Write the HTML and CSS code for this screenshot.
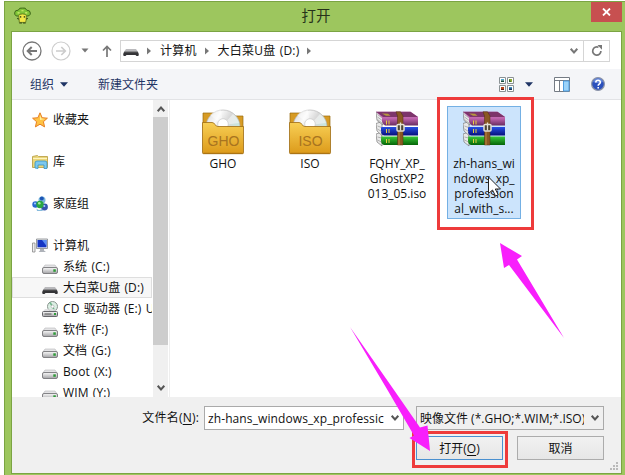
FILE: index.html
```html
<!DOCTYPE html>
<html lang="zh-CN">
<head>
    <meta charset="UTF-8">
    <meta name="viewport" content="width=device-width, initial-scale=1.0">
    <title>打开</title>

    <link rel="stylesheet" href="styles.css">
</head>
<body>

    <!-- shared icons -->
    <svg class="defs" width="0" height="0">
      <defs>
        <linearGradient id="gold" x1="0" y1="0" x2="0" y2="1">
          <stop offset="0" stop-color="#f8cf55"/>
          <stop offset="1" stop-color="#dc9a1a"/>
        </linearGradient>
        <linearGradient id="disc" x1="0" y1="0" x2="1" y2="0.6">
          <stop offset="0" stop-color="#d4d4d4"/>
          <stop offset="0.35" stop-color="#fafafa"/>
          <stop offset="0.6" stop-color="#d8d8d8"/>
          <stop offset="1" stop-color="#c2ebe2"/>
        </linearGradient>
        <linearGradient id="metal" x1="0" y1="0" x2="0" y2="1">
          <stop offset="0" stop-color="#fafafa"/>
          <stop offset="1" stop-color="#a3a3a6"/>
        </linearGradient>
        <linearGradient id="pink" x1="0" y1="0" x2="0" y2="1">
          <stop offset="0" stop-color="#d58acb"/>
          <stop offset="0.5" stop-color="#bd62ab"/>
          <stop offset="1" stop-color="#692c60"/>
        </linearGradient>
        <linearGradient id="blue" x1="0" y1="0" x2="0" y2="1">
          <stop offset="0" stop-color="#2750e6"/>
          <stop offset="1" stop-color="#07107b"/>
        </linearGradient>
        <linearGradient id="green" x1="0" y1="0" x2="0" y2="1">
          <stop offset="0" stop-color="#38c938"/>
          <stop offset="1" stop-color="#056408"/>
        </linearGradient>
      </defs>
      <symbol id="drive" viewBox="0 0 16 10">
        <path d="M3 1h10l2.500 3.500H.5z" fill="#e4e4e6" stroke="#b5b5b8" stroke-width=".6"/>
        <rect x=".5" y="3.500" width="15" height="6" rx="1.500" fill="url(#metal)" stroke="#77777b" stroke-width=".9"/>
        <rect x="11.300" y="5.300" width="2.500" height="2.500" fill="#2f9a39"/>
      </symbol>
      <symbol id="usb" viewBox="0 0 16 10">
        <path d="M3 2h10l2.500 3.500H.5z" fill="#b9b9bc"/>
        <path d="M1.500 4.800h13q1.300 1 1.300 2.600t-1 1.600H13.500l-1-1h-9l-1 1H1.200Q.2 9 .2 7.500t1.300-2.700z" fill="#343437"/>
        <path d="M1.500 5h13" stroke="#777" stroke-width=".7"/>
      </symbol>
      <symbol id="chevron" viewBox="0 0 10 8">
        <path d="M1.700 1.800L5 5.400l3.300-3.600" fill="none" stroke="currentColor" stroke-width="2"/>
      </symbol>
      <symbol id="folder" viewBox="0 0 44 48">
        <path d="M2 6h11v4h18V9h11v12H2z" fill="#d79b24" stroke="#9a6a10" stroke-width=".7"/>
        <circle cx="22" cy="20" r="17" fill="url(#disc)" stroke="#b7b7b7" stroke-width=".7"/>
        <path d="M22 18L9 8q5-5 11-5zM22 18l10-11q5 4 6 9z" fill="#fff" opacity=".45"/>
        <circle cx="22" cy="17" r="5.300" fill="#fff" stroke="#c9c9c9" stroke-width=".7"/>
        <path d="M1.500 15.500h9.500q2 0 3 2t3 2H42.500v26.200q0 1-1 1h-39q-1 0-1-1z" fill="url(#gold)" stroke="#9d6b13" stroke-width=".8"/>
        <path d="M2.300 46.300h39.400" stroke="#a87010"/>
      </symbol>
      <symbol id="archive" viewBox="0 0 42 36">
        <path d="M0 23l6-2v14L1 31z" fill="#e9e9e9" stroke="#666" stroke-width=".6"/>
        <path d="M5 25.500h37V34H8q-3-1-3-4z" fill="url(#green)"/>
        <path d="M0 12.500l6-2v14L1 20z" fill="#e9e9e9" stroke="#666" stroke-width=".6"/>
        <path d="M5 16h37v8.500H8q-3-1-3-4z" fill="url(#blue)"/>
        <path d="M0 1l7 4v9L1 9.500z" fill="#e9e9e9" stroke="#666" stroke-width=".6"/>
        <path d="M0 .8h34.500L42 6v8.500H9Q5 12 6 7z" fill="url(#pink)"/>
        <path d="M0 .8h34.500L42 6H7z" fill="#7d356b"/>
        <path d="M6 2.500l6 .2 2.500 2H10z" fill="#b5993d"/>
        <path d="M1.500 3.500l4 3M1.500 6l4 3M1.500 8.500l5 4M1.500 15l4 1.500M1.500 18l4 2.500M1.500 26l4 1M1.500 29l4 2" stroke="#9a9a9a" stroke-width=".7"/>
        <path d="M10.500 9.500v4M13 9.500v4M10.500 18v4M13 18v4M10.500 28v4M13 28v4" stroke="#e6cf3e"/>
        <path d="M20 .8h4.500L27 5v29h-5.500V5z" fill="#8a5823" stroke="#4f3110" stroke-width=".5"/>
        <path d="M23 14v20" stroke="#bb8745"/>
        <rect x="21" y="13.500" width="7" height="6.500" rx="1" fill="#4d4635" stroke="#e3e0d5" stroke-width="1.500"/>
        <path d="M24.500 11.500v8" stroke="#e3e0d5" stroke-width="1.300"/>
      </symbol>
    </svg>

    <div class="window">
      <header class="titlebar">
        <svg class="app-icon" viewBox="0 0 16 16">
          <path d="M4.500 8.500Q.5 9 .6 5.500.8 2.800 4 3 5 .3 8 1q3-.8 4 2 3.300 0 3.400 2.700.1 3-3.900 2.800z" fill="#7fc437" stroke="#2f5613" stroke-width=".8"/>
          <path d="M3.300 5.500h2M7 3.500h2M10.500 5.500h2" stroke="#d3f071"/>
          <path d="M4.500 8q0-1.500 3.500-1.500T11.500 8v3.500L11 14.500H5z" fill="#f2e747" stroke="#5b741a" stroke-width=".8"/>
          <path d="M6.300 8.500v1.500M9.700 8.500v1.500M3 10.500l1.500 1M13 10.500l-1.500 1M5 15h2.500M8.500 15H11" stroke="#354415"/>
        </svg>
        <h1 class="title">打开</h1>
        <button class="close" aria-label="关闭">
          <svg width="9" height="8" viewBox="0 0 9 8"><path d="M1 .5l7 7M8 .5l-7 7" stroke="#fff" stroke-width="1.800"/></svg>
        </button>
      </header>

      <div class="client">
        <nav class="navbar">
          <svg class="nav-back" viewBox="0 0 20 20"><circle cx="10" cy="10" r="9" fill="#fff" stroke="#777" stroke-width="1.300"/><path d="M15 10H6M9.700 6L5.700 10l4 4" fill="none" stroke="#777" stroke-width="2"/></svg>
          <svg class="nav-forward" viewBox="0 0 20 20"><circle cx="10" cy="10" r="9" fill="#fff" stroke="#ccc" stroke-width="1.200"/><path d="M5 10h9M10.300 6l4 4-4 4" fill="none" stroke="#ccc" stroke-width="1.700"/></svg>
          <svg class="nav-recent" viewBox="0 0 8 5"><path d="M.5.500h7L4 4.500z" fill="#777"/></svg>
          <svg class="nav-up" viewBox="0 0 10 12"><path d="M5 12V2M1 5.500l4-4 4 4" fill="none" stroke="#777" stroke-width="1.700"/></svg>
          <div class="address">
            <svg class="address-icon"><use href="#usb"/></svg>
            <svg class="crumb-arrow" viewBox="0 0 4 8"><path d="M0 .5L4 4 0 7.500z"/></svg>
            <span class="crumb">计算机</span>
            <svg class="crumb-arrow" viewBox="0 0 4 8"><path d="M0 .5L4 4 0 7.500z"/></svg>
            <span class="crumb">大白菜U盘 (D:)</span>
            <svg class="crumb-arrow" viewBox="0 0 4 8"><path d="M0 .5L4 4 0 7.500z"/></svg>
            <svg class="chevron address-chevron"><use href="#chevron"/></svg>
            <div class="refresh">
              <svg width="12" height="12" viewBox="0 0 12 12"><path d="M7.500 2.300A4.100 4.100 0 1 0 9.900 6" fill="none" stroke="#777" stroke-width="1.700"/><path d="M6.500 0h4.500v4.800z" fill="#777"/></svg>
            </div>
          </div>
        </nav>

        <div class="toolbar">
          <span class="organize">组织</span>
          <svg class="tool-arrow" viewBox="0 0 8 5"><path d="M0 .3h8L4 4.700z"/></svg>
          <span class="new-folder">新建文件夹</span>
          <svg class="view-icon" viewBox="0 0 15 15">
            <g fill="#fff" stroke="#8a9295"><path d="M.5.500h6v6h-6zM8.500.500h6v6h-6zM.5 8.500h6v6h-6zM8.500 8.500h6v6h-6z"/></g>
            <path d="M2 2h3v1.500H2z" fill="#50a9cf"/><path d="M2 3.500h3V5H2z" fill="#164c3c"/>
            <path d="M10 2h3v3h-3z" fill="#8da933"/><path d="M10 2l2 3h-2z" fill="#315f31"/>
            <path d="M2 10h3v3H2z" fill="#b74117"/><path d="M2 12h3v1H2z" fill="#5b1a12"/>
            <path d="M10 10h3v3h-3z" fill="#438cc0"/><path d="M10 11.500h3V13h-3z" fill="#18345c"/>
          </svg>
          <svg class="tool-arrow view-arrow" viewBox="0 0 8 5"><path d="M0 .3h8L4 4.700z"/></svg>
          <svg class="pane-icon" viewBox="0 0 16 15">
            <path d="M.5.500h15v14H.5z" fill="#fff" stroke="#747b84"/><path d="M.5 3.500h15M5.500 3.500v11" stroke="#747b84"/>
            <path d="M9.500 4h5.500v10H9.500z" fill="#9bd3fa" stroke="#4d9de0"/>
          </svg>
          <svg class="help-icon" viewBox="0 0 14 14">
            <circle cx="7" cy="7" r="6.400" fill="#2b50bc" stroke="#8e95a7" stroke-width="1.200"/>
            <path d="M2 5q1-3.500 5-3.700T12 5Q7 7 2 5z" fill="#7798e6" opacity=".7"/>
            <path d="M4.800 5.500q0-2.200 2.300-2.200t2.200 2Q9.300 6.500 8 7.200 7.200 7.700 7.200 8.700M7.200 10v1.500" fill="none" stroke="#fff" stroke-width="1.600"/>
          </svg>
        </div>

        <main class="body">
          <aside class="sidebar">
            <ul class="tree">
              <li class="group">
                <svg class="group-icon" viewBox="0 0 16 16"><path d="M8 .8l2.100 4.900 5.300.5-4 3.500 1.200 5.200L8 12.200l-4.600 2.700 1.200-5.200-4-3.500 5.300-.5z" fill="#ffc344" stroke="#e77f24"/><path d="M8 3l1.300 3.500L13 7 8 8z" fill="#fff1a0"/></svg>收藏夹
              </li>
              <li class="group">
                <svg class="group-icon" viewBox="0 0 16 16"><path d="M.5 2.500l5-1 1 1h9v11H.5z" fill="#ead67a" stroke="#c3aa56"/><path d="M1 4.500h14" stroke="#fff4bd"/><path d="M3 14V9q0-2 2-2h8q2 0 2 2v5.500h-3V11H6v3.500z" fill="#7cc8ee" stroke="#3293c5" stroke-width=".8"/></svg>库
              </li>
              <li class="group">
                <svg class="group-icon" viewBox="0 0 16 16"><circle cx="10" cy="4" r="3.500" fill="#78b5dc"/><circle cx="9.800" cy="2.500" r="2" fill="#1d55b5"/><circle cx="3.500" cy="8.500" r="3.200" fill="#2867d2"/><circle cx="12.500" cy="11" r="3.400" fill="#3454ae"/><circle cx="8" cy="8.500" r="3.700" fill="#2aa743"/><path d="M4.500 12.500q3 3 5 0L11 15H5z" fill="#87bbdd"/><circle cx="7.300" cy="7.200" r="1.300" fill="#a8e99b"/><circle cx="3" cy="7.500" r="1" fill="#a7ceff"/><circle cx="12.300" cy="10" r="1" fill="#a7ceff"/></svg>家庭组
              </li>
              <li class="group computer">
                <svg class="group-icon" viewBox="0 0 16 16"><path d="M.5 5h2.500v9H.5z" fill="#eee" stroke="#888" stroke-width=".8"/><path d="M4.500 1h11v9.500h-11z" fill="#e7e9ec" stroke="#83878c" stroke-width=".8"/><path d="M5.500 2h9v7.300h-9z" fill="#1535c4"/><path d="M10 2h4.500v6z" fill="#5c8ff4"/><path d="M8 11h4v1.500l2 1.500H6.500L8 12.500z" fill="#aeb2b9"/></svg>计算机
              </li>
              <li class="drive"><svg class="drive-icon"><use href="#drive"/></svg>系统 (C:)</li>
              <li class="drive is-selected"><svg class="drive-icon"><use href="#usb"/></svg>大白菜U盘 (D:)</li>
              <li class="drive">
                <svg class="cd-icon" viewBox="0 0 16 16"><circle cx="10.500" cy="5.500" r="5" fill="#dcefe4" stroke="#8b9690"/><path d="M10.500 5.500L8 1.500M10.500 5.500l2 4" stroke="#6fb58a" stroke-width="1.500"/><circle cx="10.500" cy="5.500" r="1.500" fill="#fff" stroke="#999" stroke-width=".5"/><path d="M3 8h10l2.500 3H.5z" fill="#dadadc" opacity=".8"/><rect x=".5" y="10.500" width="15" height="5" rx="1" fill="url(#metal)" stroke="#68686c"/><path d="M2.500 13h7" stroke="#555"/><path d="M12 12h2v2h-2z" fill="#2f9a39"/></svg>CD 驱动器 (E:) U
              </li>
              <li class="drive"><svg class="drive-icon"><use href="#drive"/></svg>软件 (F:)</li>
              <li class="drive"><svg class="drive-icon"><use href="#drive"/></svg>文档 (G:)</li>
              <li class="drive"><svg class="drive-icon"><use href="#drive"/></svg>Boot (X:)</li>
              <li class="drive"><svg class="drive-icon"><use href="#drive"/></svg>WIM (Y:)</li>
            </ul>
            <div class="scrollbar">
              <svg class="chevron chevron-up"><use href="#chevron"/></svg>
              <div class="thumb"></div>
              <svg class="chevron"><use href="#chevron"/></svg>
            </div>
          </aside>

          <section class="files">
            <figure class="file">
              <svg class="folder-icon" viewBox="0 0 44 48"><use href="#folder"/><text class="folder-text" x="22.500" y="38.500">GHO</text></svg>
              <figcaption>GHO</figcaption>
            </figure>
            <figure class="file">
              <svg class="folder-icon" viewBox="0 0 44 48"><use href="#folder"/><text class="folder-text" x="22.500" y="38.500">ISO</text></svg>
              <figcaption>ISO</figcaption>
            </figure>
            <figure class="file">
              <svg class="archive-icon"><use href="#archive"/></svg>
              <figcaption>FQHY_XP_<br>GhostXP2<br>013_05.iso</figcaption>
            </figure>
            <figure class="file is-active">
              <svg class="archive-icon"><use href="#archive"/></svg>
              <figcaption>zh-hans_wi<br>ndows_xp_<br>profession<br>al_with_s...</figcaption>
            </figure>
          </section>
        </main>

        <footer class="footer">
          <div class="name-label">文件名(<u>N</u>):</div>
          <div class="name-input"><span>zh-hans_windows_xp_professic</span><svg class="chevron"><use href="#chevron"/></svg></div>
          <div class="type-select"><span>映像文件 (*.GHO;*.WIM;*.ISO)</span><svg class="chevron"><use href="#chevron"/></svg></div>
          <div class="buttons">
            <button class="btn btn-open">打开(<u>O</u>)</button>
            <button class="btn">取消</button>
          </div>
          <svg class="grip" viewBox="0 0 8 8"><path d="M6 0h2v2H6zM3 3h2v2H3zM6 3h2v2H6zM0 6h2v2H0zM3 6h2v2H3zM6 6h2v2H6z" fill="#b9b9b9"/></svg>
        </footer>
      </div>
    </div>

    <!-- red frames, arrows and the mouse pointer lie over the dialog -->
    <svg class="marks" viewBox="0 0 625 475">
      <rect x="438.500" y="98.500" width="94" height="130" fill="none" stroke="#ee3b3b" stroke-width="3"/>
      <rect x="413.500" y="432.500" width="93" height="34" fill="none" stroke="#ee3b3b" stroke-width="3"/>
      <path d="M500 243l22 13-5 3.500L564 338 509 265l-5 3z" fill="#f81ffc"/>
      <path d="M350 327l44 63 26 37.500 7.500-2 2.500 25.500-20.500-13 4.500-2.500-26.500-45.500z" fill="#f81ffc"/>
      <path d="M488.500 177v16.500l4-3.500 3 6 2.700-1.300-2.900-5.700h5.200z" fill="#fff" stroke="#222"/>
    </svg>

</body>
</html>
```
FILE: styles.css
```css
html,
body {
  height: 100%;
  overflow: hidden;
}

* {
  box-sizing: border-box;
}

body {
  margin: 0;
  padding: 1px 0 0 4px;
  background: #fff;
  color: #111;
  font-family: "Open Sans", "Noto Sans CJK SC", sans-serif;
  font-size: 12px;
  line-height: 15px;
}

svg {
  display: block;
  flex: none;
}

u {
  text-underline-offset: 2px;
}

.defs {
  position: absolute;
}

.window {
  height: 474px;
  padding: 0 3px 0 7px;
  background: #9dc65e;
  border-top: 1px solid #7ba443;
  border-left: 1px solid #7ba443;
}

.titlebar {
  display: flex;
  height: 29px;
}

.app-icon {
  width: 17px;
  height: 17px;
  margin: 5px 0 0 2px;
}

.title {
  flex: 1;
  margin: 4px 0 0;
  padding-left: 10px;
  text-align: center;
  font-size: 14.5px;
  font-weight: normal;
  line-height: 20px;
  color: #26321a;
}

.close {
  display: flex;
  align-items: center;
  justify-content: center;
  width: 31px;
  height: 20px;
  padding: 0;
  border: 0;
  background: #c75050;
}

.client {
  height: 443px;
  background: #fff;
  border: 1px solid #7ba443;
  margin-left: -1px;
}

/* navigation */

.navbar {
  display: flex;
  align-items: center;
  height: 37px;
  padding: 0 11px 0 10px;
}

.nav-back,
.nav-forward {
  width: 20px;
  height: 20px;
}

.nav-forward {
  margin-left: 9px;
}

.nav-recent {
  width: 8px;
  height: 5px;
  margin-left: 10px;
}

.nav-up {
  width: 10px;
  height: 12px;
  margin-left: 13px;
}

.address {
  display: flex;
  align-items: center;
  flex: 1;
  height: 22px;
  margin-left: 8px;
  padding-left: 2px;
  border: 1px solid #d5d5d5;
}

.address-icon {
  width: 16px;
  height: 10px;
  margin-top: 2px;
}

.crumb-arrow {
  width: 4px;
  height: 8px;
  margin-left: 8px;
  fill: #777;
}

.crumb {
  margin-left: 9px;
  letter-spacing: .2px;
  word-spacing: 1px;
  white-space: nowrap;
}

.chevron {
  width: 10px;
  height: 8px;
  color: #555;
}

.address-chevron {
  margin-left: auto;
  color: #777;
}

.refresh {
  display: flex;
  align-items: center;
  justify-content: center;
  width: 26px;
  height: 20px;
  margin-left: 4px;
  border-left: 1px solid #d5d5d5;
}

.toolbar {
  display: flex;
  align-items: center;
  height: 31px;
  padding: 0 16px 0 18px;
  background: #f4f5f8;
  border-bottom: 1px solid #e2e3e6;
  color: #1f3465;
}

.tool-arrow {
  width: 8px;
  height: 5px;
  margin-left: 6px;
  fill: #1f3465;
}

.new-folder {
  margin-left: 30px;
}

.view-icon {
  width: 15px;
  height: 15px;
  margin-left: auto;
}

.view-arrow {
  margin-left: 11px;
}

.pane-icon {
  width: 16px;
  height: 15px;
  margin-left: 21px;
}

.help-icon {
  width: 14px;
  height: 14px;
  margin-left: 21px;
}

/* folder tree and files */

.body {
  display: flex;
  height: 297px;
}

.sidebar {
  display: flex;
  width: 158px;
  border-right: 1px solid #eee;
}

.tree {
  width: 141px;
  height: 297px;
  margin: 0;
  padding: 9px 1px 0 0;
  overflow: hidden;
  list-style: none;
}

.group,
.drive {
  display: flex;
  align-items: center;
  height: 21px;
  overflow: hidden;
  white-space: nowrap;
}

.group {
  margin-bottom: 21px;
  padding-left: 20px;
}

.computer {
  margin-bottom: 0;
}

.group-icon {
  width: 16px;
  height: 16px;
  margin-right: 5px;
}

.drive {
  padding-left: 30px;
  letter-spacing: .1px;
  word-spacing: 1px;
}

.drive-icon {
  width: 16px;
  height: 10px;
  margin: 4px 5px 0 0;
}

.cd-icon {
  width: 16px;
  height: 16px;
  margin-right: 5px;
}

.is-selected {
  padding-left: 29px;
  background: #f7f7f7;
  border: 1px solid #dedede;
}

.scrollbar {
  display: flex;
  flex-direction: column;
  align-items: center;
  width: 15px;
  background: #f0f0f0;
}

.scrollbar .chevron {
  margin-top: 5px;
}

.scrollbar .chevron-up {
  margin: 5px 0 4px;
  transform: scaleY(-1);
}

.thumb {
  width: 15px;
  height: 228px;
  margin-bottom: 34px;
  background: #cdcdcd;
}

.files {
  display: flex;
  align-items: flex-start;
  gap: 13px;
  padding: 6px 0 0 16px;
}

.file {
  display: flex;
  flex-direction: column;
  align-items: center;
  width: 74px;
  height: 113px;
  margin: 0;
  border: 1px solid transparent;
  text-align: center;
  white-space: nowrap;
}

.folder-icon {
  width: 44px;
  height: 48px;
}

.folder-text {
  fill: #a87420;
  font-family: "Liberation Sans", sans-serif;
  font-size: 14px;
  text-anchor: middle;
}

.archive-icon {
  width: 42px;
  height: 36px;
  margin: 4px 0 8px;
}

.file figcaption {
  margin-top: 1px;
}

.is-active {
  background: #cce4fc;
  border-color: #74b0e4;
}

/* file name, type and buttons */

.footer {
  position: relative;
  display: grid;
  grid-template-columns: 187px 200px 188px;
  grid-template-rows: 24px 24px;
  column-gap: 12px;
  row-gap: 6px;
  height: 76px;
  padding: 9px 0 0 5px;
  background: #f0f0f0;
}

.footer {
  column-gap: 0;
  grid-template-columns: 187px 212px 188px;
}

.name-label {
  padding: 4px 5px 0 0;
  letter-spacing: .2px;
  text-align: right;
}

.name-input,
.type-select {
  display: flex;
  align-items: center;
  border: 1px solid #aaa;
  white-space: nowrap;
}

.name-input {
  margin-right: 12px;
  padding: 0 3px;
  letter-spacing: .1px;
  background: #fff;
}

.type-select {
  padding: 0 3px;
}

.name-input span,
.type-select span {
  flex: 1;
  overflow: hidden;
}

.type-select span {
  margin-right: 6px;
}

.buttons {
  grid-column: 3;
  display: flex;
  gap: 14px;
}

.btn {
  width: 87px;
  height: 24px;
  padding: 0;
  border: 1px solid #acacac;
  background: linear-gradient(#f1f1f1, #e6e6e6);
  color: #111;
  font: inherit;
}

.btn-open {
  border-color: #4a90d0;
}

.grip {
  position: absolute;
  right: 3px;
  bottom: 3px;
  width: 8px;
  height: 8px;
}

.marks {
  position: absolute;
  top: 0;
  left: 0;
  width: 625px;
  height: 475px;
  pointer-events: none;
}
```
